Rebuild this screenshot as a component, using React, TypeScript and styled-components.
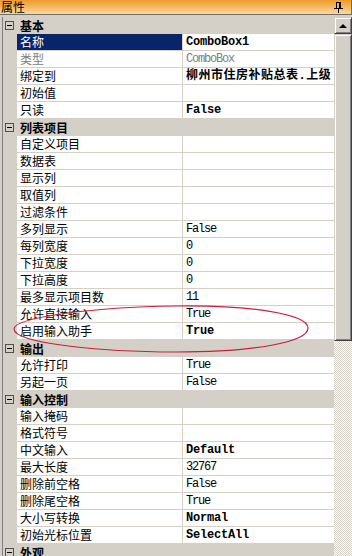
import styled, { createGlobalStyle } from 'styled-components';

const GlobalStyle = createGlobalStyle`
    html, body {
        margin: 0;
        padding: 0;
        background: #d4d0c8;
    }
    body {
        font-family: "Noto Sans CJK SC", "Liberation Sans", sans-serif;
        font-size: 12px;
    }
`;

interface PropRow {
    name: string,
    value?: string,
    bold?: boolean,
    selected?: boolean,
    disabled?: boolean,
}

interface Section {
    title: string,
    rows: PropRow[],
}

const sections: Section[] = [
    {
        title: '基本',
        rows: [
            { name: '名称', value: 'ComboBox1', bold: true, selected: true },
            { name: '类型', value: 'ComboBox', disabled: true },
            { name: '绑定到', value: '柳州市住房补贴总表.上级', bold: true },
            { name: '初始值' },
            { name: '只读', value: 'False', bold: true },
        ],
    },
    {
        title: '列表项目',
        rows: [
            { name: '自定义项目' },
            { name: '数据表' },
            { name: '显示列' },
            { name: '取值列' },
            { name: '过滤条件' },
            { name: '多列显示', value: 'False' },
            { name: '每列宽度', value: '0' },
            { name: '下拉宽度', value: '0' },
            { name: '下拉高度', value: '0' },
            { name: '最多显示项目数', value: '11' },
            { name: '允许直接输入', value: 'True' },
            { name: '启用输入助手', value: 'True', bold: true },
        ],
    },
    {
        title: '输出',
        rows: [
            { name: '允许打印', value: 'True' },
            { name: '另起一页', value: 'False' },
        ],
    },
    {
        title: '输入控制',
        rows: [
            { name: '输入掩码' },
            { name: '格式符号' },
            { name: '中文输入', value: 'Default', bold: true },
            { name: '最大长度', value: '32767' },
            { name: '删除前空格', value: 'False' },
            { name: '删除尾空格', value: 'True' },
            { name: '大小写转换', value: 'Normal', bold: true },
            { name: '初始光标位置', value: 'SelectAll', bold: true },
        ],
    },
    {
        title: '外观',
        rows: [],
    },
];

// values with chinese text get a little more room, like the bold song font
const isWide = (s?: string) => !!s && /[^\x00-\x7f]/.test(s);

const Panel = styled.div`
    position: relative;
    width: 352px;
    height: 556px;
    overflow: hidden;
    background: #d4d0c8;
`;

const TitleBar = styled.div`
    height: 14px;
    display: flex;
    align-items: center;
    justify-content: space-between;
    padding: 0 8px 0 1px;
    border-bottom: 1px solid #6d6d6d;
    border-right: 1px solid #6d6d6d;
    background: linear-gradient(to bottom, #ef9a2e 0%, #f4b55a 45%, #fbd9a2 100%);
    color: #000;
`;

const TitleText = styled.span`
    display: block;
    font-size: 12px;
    line-height: 14px;
    height: 14px;
`;

const Body = styled.div`
    display: flex;
    padding-top: 2px;
`;

const Grid = styled.div`
    margin-left: 2px;
    width: 331px;
    border-left: 1px solid #808080;
    display: flex;
    flex-direction: column;
`;

const Row = styled.div`
    display: flex;
    height: 17px;
    flex: none;
`;

const Gutter = styled.div`
    width: 14px;
    flex: none;
    display: flex;
    align-items: center;
    padding-left: 2px;
    box-sizing: border-box;
`;

const Expander = styled.div`
    position: relative;
    width: 9px;
    height: 9px;
    box-sizing: border-box;
    border: 1px solid #505050;

    &::after {
        content: '';
        position: absolute;
        left: 1px;
        top: 3px;
        width: 5px;
        height: 1px;
        background: #000;
    }
`;

const CategoryLabel = styled.div`
    flex: 1;
    padding-left: 3px;
    font-weight: bold;
    line-height: 17px;
    color: #000;
`;

const NameCell = styled.div<{ $selected?: boolean; $disabled?: boolean }>`
    width: 166px;
    flex: none;
    box-sizing: border-box;
    padding-left: 3px;
    border-right: 1px solid #d4d0c8;
    border-bottom: 1px solid #d4d0c8;
    background: ${(p) => (p.$selected ? '#0a246a' : '#fff')};
    color: ${(p) => (p.$selected ? '#fff' : p.$disabled ? '#808080' : '#000')};
    line-height: 16px;
    white-space: nowrap;
    overflow: hidden;
`;

const ValueCell = styled.div<{ $bold?: boolean; $disabled?: boolean; $wide?: boolean }>`
    flex: 1;
    min-width: 0;
    box-sizing: border-box;
    padding-left: 3px;
    border-bottom: 1px solid #d4d0c8;
    background: #fff;
    font-family: "Liberation Mono", "Noto Sans CJK SC", monospace;
    font-size: 12px;
    font-weight: ${(p) => (p.$bold ? 'bold' : 'normal')};
    letter-spacing: ${(p) => (p.$wide ? '0.5px' : p.$bold ? '-0.2px' : '-1.2px')};
    color: ${(p) => (p.$disabled ? '#808080' : '#000')};
    line-height: 16px;
    white-space: nowrap;
    overflow: hidden;
`;

const ScrollBar = styled.div`
    width: 18px;
    height: 554px;
    flex: none;
    display: flex;
    flex-direction: column;
`;

const raised = `
    box-sizing: border-box;
    background: #d4d0c8;
    border: 1px solid;
    border-color: #d4d0c8 #404040 #404040 #d4d0c8;
    box-shadow: inset 1px 1px #fff, inset -1px -1px #808080;
`;

const ScrollButton = styled.div`
    ${raised}
    height: 17px;
    flex: none;
    display: flex;
    align-items: center;
    justify-content: center;
`;

const UpArrow = styled.div`
    width: 0;
    height: 0;
    border-left: 4px solid transparent;
    border-right: 4px solid transparent;
    border-bottom: 4px solid #000;
`;

const Thumb = styled.div`
    ${raised}
    height: 307px;
    flex: none;
`;

const Track = styled.div`
    flex: 1;
    background: repeating-conic-gradient(#d4d0c8 0 25%, #ffffff 0 50%) 0 0 / 2px 2px;
`;

const Annotation = styled.svg`
    position: absolute;
    left: 0;
    top: 0;
    pointer-events: none;
`;

const PinIcon = () => (
    <svg width="9" height="11" viewBox="0 0 9 11">
        <path d="M2 0.5h5 M2.5 0.5v6 M5.5 0.5v6 M6.5 0.5v6 M0 6.5h9 M4.5 7v4" stroke="#000" strokeWidth="1" fill="none" />
    </svg>
);

const App = () => {
    return (
        <>
            <GlobalStyle />
            <Panel>
                <TitleBar>
                    <TitleText>属性</TitleText>
                    <PinIcon />
                </TitleBar>
                <Body>
                    <Grid>
                        {sections.map((section) => (
                            <div key={section.title}>
                                <Row>
                                    <Gutter><Expander /></Gutter>
                                    <CategoryLabel>{section.title}</CategoryLabel>
                                </Row>
                                {section.rows.map((row) => (
                                    <Row key={row.name}>
                                        <Gutter />
                                        <NameCell $selected={row.selected} $disabled={row.disabled}>{row.name}</NameCell>
                                        <ValueCell $bold={row.bold} $disabled={row.disabled} $wide={isWide(row.value)}>{row.value}</ValueCell>
                                    </Row>
                                ))}
                            </div>
                        ))}
                    </Grid>
                    <ScrollBar>
                        <ScrollButton><UpArrow /></ScrollButton>
                        <Thumb />
                        <Track />
                    </ScrollBar>
                </Body>
                <Annotation width="352" height="556" viewBox="0 0 352 556">
                    <path
                        d="M14 329 C14 318, 90 307, 176 306 C250 305, 308 314, 308 328 C308 342, 255 352, 176 352 C100 352, 14 343, 14 329 Z"
                        stroke="#c8203c"
                        strokeWidth="1.2"
                        fill="none"
                    />
                </Annotation>
            </Panel>
        </>
    );
};

export default App;
